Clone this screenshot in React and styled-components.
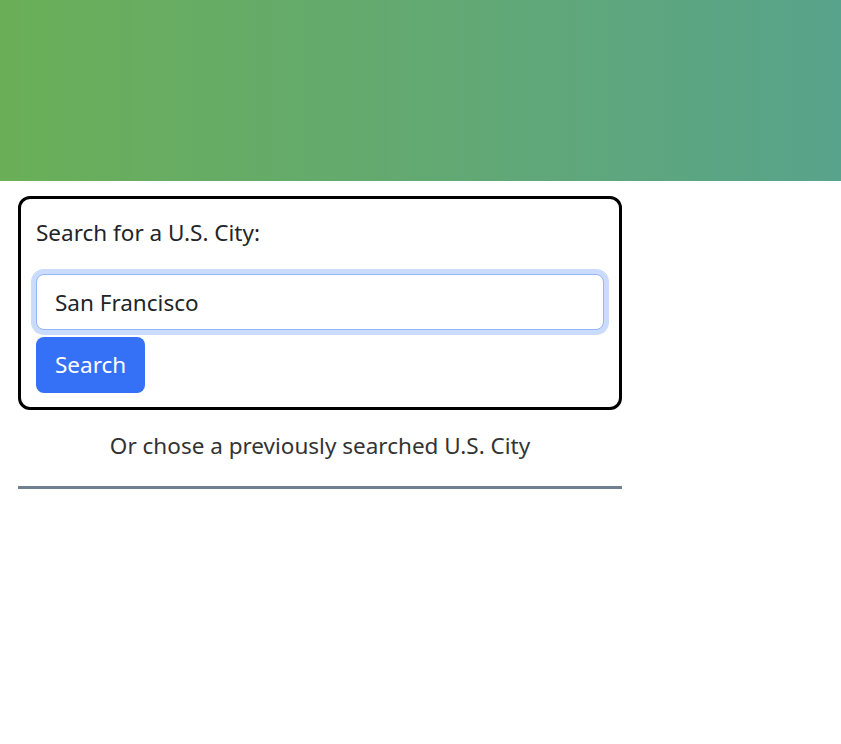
import styled, { createGlobalStyle } from 'styled-components';

const GlobalStyle = createGlobalStyle`
  body {
    margin: 0;
    font-family: 'Noto Sans', 'Open Sans', sans-serif;
    color: #212529;
    background: #fff;
  }
  * {
    box-sizing: border-box;
  }
`;

export default function App() {
  return (
    <>
      <GlobalStyle />
      <StyledHeader />
      <StyledMain>
        <StyledCard onSubmit={(e) => e.preventDefault()}>
          <StyledLabel htmlFor="city">Search for a U.S. City:</StyledLabel>
          <StyledInput id="city" type="text" defaultValue="San Francisco" autoFocus />
          <StyledButton type="submit">Search</StyledButton>
        </StyledCard>
        <StyledHint>Or chose a previously searched U.S. City</StyledHint>
        <StyledRule />
      </StyledMain>
    </>
  );
}

const StyledHeader = styled.header`
  height: 181px;
  background: linear-gradient(90deg, #6aaf57 0%, #63a972 50%, #58a38b 100%);
`;

const StyledMain = styled.main`
  width: 604px;
  margin: 15px 0 0 18px;
`;

const StyledCard = styled.form`
  display: flex;
  flex-direction: column;
  align-items: flex-start;
  border: 3px solid #000;
  border-radius: 12px;
  padding: 19px 15px 14px;
`;

const StyledLabel = styled.label`
  font-size: 22.5px;
  line-height: 30px;
  margin-bottom: 26px;
`;

const StyledInput = styled.input`
  width: 100%;
  height: 56px;
  padding: 12px 18px;
  font-family: inherit;
  font-size: 22.5px;
  line-height: 30px;
  color: #212529;
  border: 1px solid #93b6f6;
  border-radius: 8px;
  box-shadow: 0 0 0 5px rgba(13, 90, 245, 0.22);
  outline: none;
  caret-color: #000;
`;

const StyledButton = styled.button`
  margin-top: 7px;
  height: 56px;
  padding: 0 19px;
  font-family: inherit;
  font-size: 22.5px;
  line-height: 30px;
  color: #fff;
  background-color: #3571f6;
  border: none;
  border-radius: 8px;
  cursor: pointer;
`;

const StyledHint = styled.p`
  margin: 21px 0 0;
  text-align: center;
  font-size: 22.5px;
  line-height: 30px;
  color: #333;
`;

const StyledRule = styled.hr`
  margin: 25px 0 0;
  border: none;
  height: 3px;
  background-color: #708090;
`;
